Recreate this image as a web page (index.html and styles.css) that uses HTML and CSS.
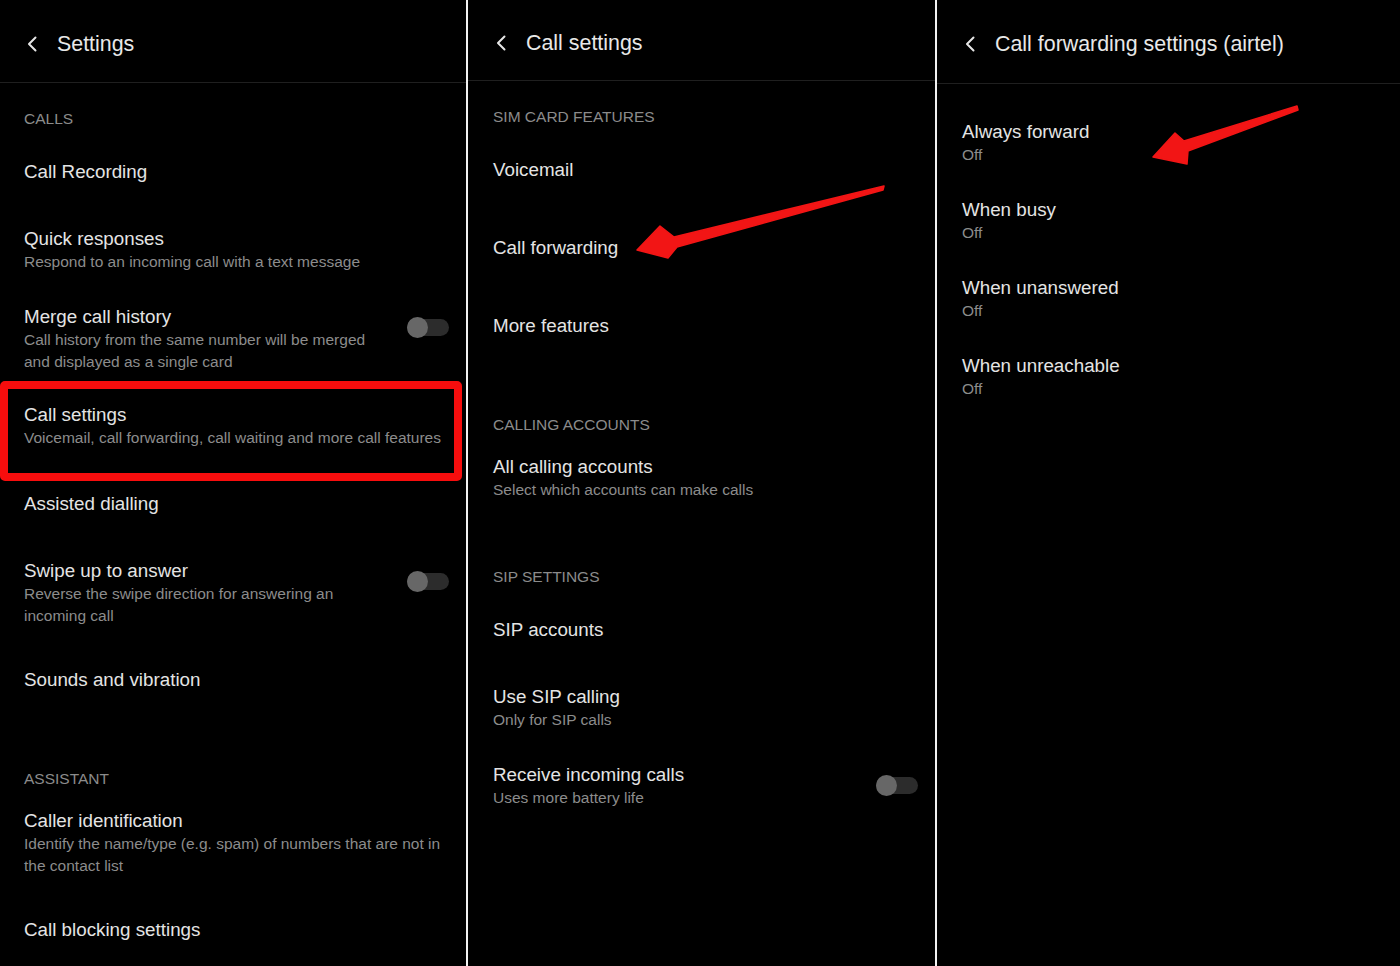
FILE: index.html
```html
<!DOCTYPE html>
<html lang="en">
<head>
<meta charset="utf-8">
<title>Call settings</title>
<link rel="stylesheet" href="styles.css">
</head>
<body>
<div class="screen">
  <section class="panel panel-one">
    <header class="bar">
      <svg class="back" viewBox="0 0 12 16" width="12" height="16"><path d="M9.5 1.5 L3 8 L9.5 14.5" /></svg>
      <h1 class="bar-title">Settings</h1>
    </header>
    <div class="group">
      <div class="cat">CALLS</div>
      <div class="item"><div class="text"><div class="title">Call Recording</div></div></div>
      <div class="item"><div class="text"><div class="title">Quick responses</div><div class="sub">Respond to an incoming call with a text message</div></div></div>
      <div class="item tight"><div class="text"><div class="title">Merge call history</div><div class="sub">Call history from the same number will be merged<br>and displayed as a single card</div></div><span class="toggle"></span></div>
      <div class="item"><div class="text"><div class="title">Call settings</div><div class="sub">Voicemail, call forwarding, call waiting and more call features</div></div><span class="mark"></span></div>
      <div class="item"><div class="text"><div class="title">Assisted dialling</div></div></div>
      <div class="item tight"><div class="text"><div class="title">Swipe up to answer</div><div class="sub">Reverse the swipe direction for answering an<br>incoming call</div></div><span class="toggle"></span></div>
      <div class="item"><div class="text"><div class="title">Sounds and vibration</div></div></div>
    </div>
    <div class="group">
      <div class="cat">ASSISTANT</div>
      <div class="item tight"><div class="text"><div class="title">Caller identification</div><div class="sub">Identify the name/type (e.g. spam) of numbers that are not in<br>the contact list</div></div></div>
      <div class="item"><div class="text"><div class="title">Call blocking settings</div></div></div>
    </div>
  </section>

  <section class="panel panel-two">
    <header class="bar bar-short">
      <svg class="back" viewBox="0 0 12 16" width="12" height="16"><path d="M9.5 1.5 L3 8 L9.5 14.5" /></svg>
      <h1 class="bar-title">Call settings</h1>
    </header>
    <div class="group">
      <div class="cat">SIM CARD FEATURES</div>
      <div class="item"><div class="text"><div class="title">Voicemail</div></div></div>
      <div class="item"><div class="text"><div class="title">Call forwarding</div></div></div>
      <div class="item"><div class="text"><div class="title">More features</div></div></div>
    </div>
    <div class="group">
      <div class="cat">CALLING ACCOUNTS</div>
      <div class="item"><div class="text"><div class="title">All calling accounts</div><div class="sub">Select which accounts can make calls</div></div></div>
    </div>
    <div class="group">
      <div class="cat">SIP SETTINGS</div>
      <div class="item"><div class="text"><div class="title">SIP accounts</div></div></div>
      <div class="item"><div class="text"><div class="title">Use SIP calling</div><div class="sub">Only for SIP calls</div></div></div>
      <div class="item"><div class="text"><div class="title">Receive incoming calls</div><div class="sub">Uses more battery life</div></div><span class="toggle"></span></div>
    </div>
  </section>

  <section class="panel panel-three">
    <header class="bar bar-tall">
      <svg class="back" viewBox="0 0 12 16" width="12" height="16"><path d="M9.5 1.5 L3 8 L9.5 14.5" /></svg>
      <h1 class="bar-title">Call forwarding settings (airtel)</h1>
    </header>
    <div class="group list-plain">
      <div class="item"><div class="text"><div class="title">Always forward</div><div class="sub">Off</div></div></div>
      <div class="item"><div class="text"><div class="title">When busy</div><div class="sub">Off</div></div></div>
      <div class="item"><div class="text"><div class="title">When unanswered</div><div class="sub">Off</div></div></div>
      <div class="item"><div class="text"><div class="title">When unreachable</div><div class="sub">Off</div></div></div>
    </div>
  </section>

  <svg class="arrows" viewBox="0 0 1400 966" width="1400" height="966">
    <polygon points="884,186 674,237 660,226 637,250 668,258 677,247 883,190" />
    <polygon points="1297,106 1184,141 1175,133 1153,157 1187,164 1188,151 1298,110" />
  </svg>
</div>
</body>
</html>
```

FILE: styles.css
```css
html, body {
  margin: 0;
  padding: 0;
  background: #000;
}

body {
  font-family: "Liberation Sans", Arial, sans-serif;
  color: #e4e4e4;
}

.screen {
  position: relative;
  display: flex;
  width: 1400px;
  height: 966px;
  overflow: hidden;
  background: #000;
}

.panel {
  --inset: 24px;
  flex: none;
  height: 100%;
  background: #000;
  box-sizing: border-box;
}

.panel-one {
  width: 468px;
  border-right: 2px solid #f2f2f2;
}

.panel-two {
  --inset: 25px;
  width: 469px;
  border-right: 2px solid #f2f2f2;
}

.panel-three {
  --inset: 25px;
  flex: 1;
}

.bar {
  display: flex;
  align-items: center;
  height: 83px;
  padding: 5px 0 0 calc(var(--inset) + 2px);
  box-sizing: border-box;
  border-bottom: 1px solid #1f1f1f;
}

.bar-short {
  height: 81px;
}

.bar-tall {
  height: 84px;
}

.back {
  flex: none;
  margin-right: 19px;
}

.back path {
  fill: none;
  stroke: #e6e6e6;
  stroke-width: 2;
  stroke-linecap: round;
  stroke-linejoin: round;
}

.bar-title {
  margin: 0;
  font-size: 21.4px;
  font-weight: normal;
  line-height: 28px;
  color: #e8e8e8;
}

.group + .group {
  margin-top: 24px;
}

.list-plain {
  padding-top: 20px;
}

.cat {
  padding: 26px 24px 4px var(--inset);
  font-size: 15.5px;
  line-height: 20px;
  color: #8b8b8b;
}

.item {
  position: relative;
  display: flex;
  align-items: center;
  min-height: 78px;
  padding: 16px 17px 16px var(--inset);
  box-sizing: border-box;
}

.item.tight {
  padding-bottom: 14px;
}

.text {
  flex: 1;
  min-width: 0;
}

.title {
  font-size: 18.8px;
  line-height: 24px;
  color: #e4e4e4;
}

.sub {
  font-size: 15.5px;
  line-height: 22px;
  color: #8c8c8c;
}

.toggle {
  position: relative;
  flex: none;
  align-self: flex-start;
  width: 42px;
  height: 21px;
  margin-top: 12px;
}

.toggle::before {
  content: "";
  position: absolute;
  left: 0;
  right: 0;
  top: 2px;
  bottom: 2px;
  border-radius: 9px;
  background: #2c2c2c;
}

.toggle::after {
  content: "";
  position: absolute;
  left: 0;
  top: 0;
  width: 21px;
  height: 21px;
  border-radius: 50%;
  background: #676767;
}

.mark {
  position: absolute;
  top: -6px;
  bottom: -16px;
  left: 0;
  right: 4px;
  border: 8px solid #f70d0d;
  border-radius: 5px;
}

.arrows {
  position: absolute;
  left: 0;
  top: 0;
  pointer-events: none;
}

.arrows polygon {
  fill: #f21515;
  stroke: #f21515;
  stroke-width: 1.5;
  stroke-linejoin: round;
}
```
